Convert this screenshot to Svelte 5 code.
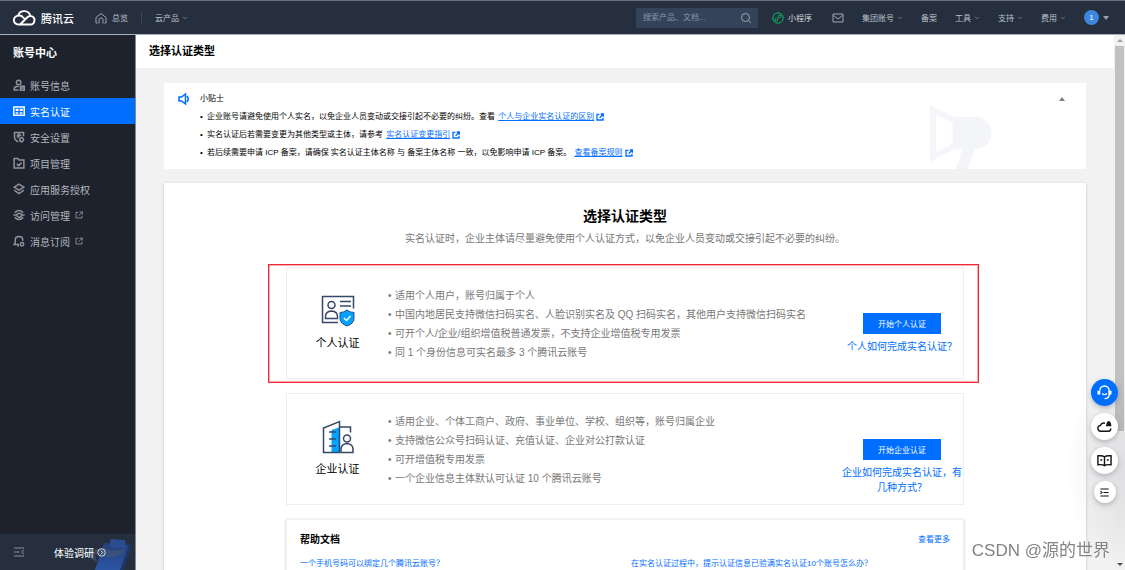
<script>
    let keyword = '';
    let tipsOpen = true;

    const menus = [
        { name: '集团账号', arrow: true },
        { name: '备案', arrow: false },
        { name: '工具', arrow: true },
        { name: '支持', arrow: true },
        { name: '费用', arrow: true }
    ];

    // Icon paths are drawn on a 16x16 grid
    const sideItems = [
        {
            name: '账号信息',
            icon: 'M7.5 1.5a3 3 0 1 1 0 6a3 3 0 0 1 0-6z M7.500 14.500h-6v-1q0-3.500 4-3.500h2 M10 9.500h5v5.500h-5z M10 12h5'
        },
        {
            name: '实名认证',
            icon: 'M1 2.500h14v11h-14z M4.500 6h2v1h-2z M3.500 10.500h3.500 M10 6h2v1h-2z M9 10.500h3.500',
            active: true
        },
        {
            name: '安全设置',
            icon: 'M14 7v-5h-12v6q0 4 5 6.500 M5 5.500h6 M8 3v5 M5 8h3 M11.500 9a2.500 2.500 0 1 1 0 5a2.500 2.500 0 0 1 0-5z M11.500 7.500v1.500 M11.500 14v1.500'
        },
        {
            name: '项目管理',
            icon: 'M1.500 14.500v-12.500h5l1.500 2h6.500v10.500z M5 9l2.500 2.500l4-4'
        },
        {
            name: '应用服务授权',
            icon: 'M8 1.500l6.500 4l-6.500 4l-6.500-4z M1.500 9.500l6.500 4.500l6.500-4.500'
        },
        {
            name: '访问管理',
            icon: 'M2.500 5a6.500 6.500 0 0 1 11 0 M13.500 11a6.500 6.500 0 0 1-11 0 M0.500 8h4l2-2h3.500l2 2h3.500 M5 9l2.500 2h2.500l2-3',
            external: true
        },
        {
            name: '消息订阅',
            icon: 'M13 7.500v-1q0-4.500-5-4.500t-5 4.500v4l-1.500 2h6.500 M6 14.500h2 M12 10a2.250 2.250 0 1 1 0 4.500a2.250 2.250 0 0 1 0-4.500z',
            external: true
        }
    ];

    const tips = [
        {
            text: '企业账号请避免使用个人实名，以免企业人员变动或交接引起不必要的纠纷。查看',
            link: '个人与企业实名认证的区别'
        },
        {
            text: '实名认证后若需要变更为其他类型或主体，请参考',
            link: '实名认证变更指引'
        },
        {
            text: '若后续需要申请 ICP 备案，请确保 实名认证主体名称 与 备案主体名称 一致，以免影响申请 ICP 备案。',
            link: '查看备案规则'
        }
    ];

    const types = [
        {
            id: 'person',
            name: '个人认证',
            button: '开始个人认证',
            question: '个人如何完成实名认证？',
            marked: true,
            rules: [
                '适用个人用户，账号归属于个人',
                '中国内地居民支持微信扫码实名、人脸识别实名及 QQ 扫码实名，其他用户支持微信扫码实名',
                '可开个人/企业/组织增值税普通发票，不支持企业增值税专用发票',
                '同 1 个身份信息可实名最多 3 个腾讯云账号'
            ]
        },
        {
            id: 'company',
            name: '企业认证',
            button: '开始企业认证',
            question: '企业如何完成实名认证，有几种方式？',
            marked: false,
            rules: [
                '适用企业、个体工商户、政府、事业单位、学校、组织等，账号归属企业',
                '支持微信公众号扫码认证、充值认证、企业对公打款认证',
                '可开增值税专用发票',
                '一个企业信息主体默认可认证 10 个腾讯云账号'
            ]
        }
    ];

    const docs = [
        '一个手机号码可以绑定几个腾讯云账号？',
        '在实名认证过程中，提示认证信息已验满实名认证10个账号怎么办？'
    ];
</script>

{#snippet chevron()}
    <svg class="chevron" viewBox="0 0 8 8"><path d="M1.500 2.500l2.500 2.500l2.500-2.500" /></svg>
{/snippet}

{#snippet external()}
    <svg class="external" viewBox="0 0 12 12"><path d="M5 2h-3.500v8.500h9v-3.500 M7 1.500h4v4 M11 1.500l-5.500 5.500" /></svg>
{/snippet}

<div class="page">
    <header>
        <a class="logo" href="#home">
            <svg viewBox="0 0 24 18">
                <path d="M5.500 15.800h12.500a4.500 4.500 0 0 0 1.200-8.800c-1.600-.4-3 0-4.200 1.200l-7.600 7.600 M12.600 10.400l-3.200-3.100a4.700 4.700 0 0 0-4-.7a4.600 4.600 0 0 0 .2 9.200 M5.300 6.600a6.600 6.600 0 0 1 12.800.4" />
            </svg>
            <span>腾讯云</span>
        </a>
        <a class="overview" href="#overview">
            <svg class="line-icon" viewBox="0 0 12 12"><path d="M2.500 11h-1.500v-5.500l5-4l5 4v5.500h-1.500 M4 11.500v-4q0-1.500 2-1.500t2 1.500v4" /></svg>
            总览
        </a>
        <span class="divider"></span>
        <button class="menu">云产品{@render chevron()}</button>
        <div class="search">
            <input type="text" aria-label="搜索" placeholder="搜索产品、文档..." bind:value={keyword}>
            <svg class="line-icon" viewBox="0 0 12 12"><circle cx="5.500" cy="5.500" r="4" /><path d="M8.500 8.500l2.500 2.500" /></svg>
        </div>
        <a class="mini" href="#mini">
            <svg viewBox="0 0 12 12"><circle cx="6" cy="6" r="5.200" /><path d="M6.300 4.800q0-1.800 1.500-1.800t1.200 1.500t-1.500 1.300 M5.700 7.200q0 1.800-1.500 1.800t-1.200-1.500t1.500-1.300 M6.300 4.600l-.6 2.800" /></svg>
            小程序
        </a>
        <button class="mail" aria-label="站内信">
            <svg class="line-icon" viewBox="0 0 12 12"><path d="M1 2h10v8h-10z M1.500 3.500l4.500 3.500l4.500-3.500" /></svg>
        </button>
        <nav class="menus">
            {#each menus as item}
                <button class="menu">{item.name}{#if item.arrow}{@render chevron()}{/if}</button>
            {/each}
        </nav>
        <button class="user">
            <span class="avatar">1</span>
            <span class="caret"></span>
        </button>
    </header>

    <div class="body">
        <aside>
            <h2>账号中心</h2>
            <nav>
                {#each sideItems as item}
                    <a href="#menu" class:active={item.active}>
                        <svg class="side-icon" viewBox="0 0 16 16"><path d={item.icon} /></svg>
                        {item.name}
                        {#if item.external}{@render external()}{/if}
                    </a>
                {/each}
            </nav>
            <div class="side-footer">
                <button class="fold" aria-label="收起菜单">
                    <svg viewBox="0 0 12 12"><path d="M1 2h10 M1 6h5.500 M1 10h10 M11 4l-2.500 2l2.500 2" /></svg>
                </button>
                <a href="#survey">
                    体验调研
                    <svg viewBox="0 0 12 12"><circle cx="6" cy="6" r="5" /><path d="M5 3.500l2.500 2.500l-2.500 2.500" /></svg>
                </a>
                <svg class="clipboard" viewBox="0 0 56 36">
                    <defs>
                        <linearGradient id="board" x1="0" y1="0" x2="0" y2="1">
                            <stop offset="0" stop-color="#253f76" />
                            <stop offset="1" stop-color="#2c55a5" />
                        </linearGradient>
                    </defs>
                    <path d="M25 9l28 2l-9 25h-28z" fill="url(#board)" />
                    <path d="M53 11l-9 25h-3l9-25z" fill="#1e3566" />
                    <path d="M32 5l14 1l1 7q-8 3-17-1z" fill="#2b4c8f" />
                    <path d="M3 20l9-4l12-2q14 5 23 0q-4 9-15 9q-8 0-14-3l-2 1l2 7z" fill="#485876" opacity="0.6" />
                </svg>
            </div>
        </aside>

        <main>
            <h1>选择认证类型</h1>
            <div class="content">
                <section class="tips">
                    <svg class="horn" viewBox="0 0 12 12"><path d="M1 4h2.500l4-3v10l-4-3h-2.500z M9 3q2.500 3 0 6" /></svg>
                    <div class="tips-text">
                        <h3>小贴士</h3>
                        {#if tipsOpen}
                            <ul>
                                {#each tips as tip}
                                    <li>{tip.text} <a href="#tip">{tip.link}</a> {@render external()}</li>
                                {/each}
                            </ul>
                        {/if}
                    </div>
                    <svg class="megaphone" viewBox="0 0 63 65">
                        <path fill-rule="evenodd" d="M0 0l24 12h22a16 16 0 0 1 0 33l-8 20h-12l7-20h-9l-24 13z M6 10v38l17-9v-21z" />
                    </svg>
                    <button class="toggle" aria-label="收起" onclick={() => tipsOpen = !tipsOpen}></button>
                </section>

                <section class="panel">
                    <h2>选择认证类型</h2>
                    <p class="summary">实名认证时，企业主体请尽量避免使用个人认证方式，以免企业人员变动或交接引起不必要的纠纷。</p>

                    {#each types as type}
                        <article class:marked={type.marked}>
                            <div class="kind">
                                {#if type.id === 'person'}
                                    <svg viewBox="0 0 34 34">
                                        <path class="stroke" d="M17 28.500h-15.500v-26h31v12 M19 7.500h11 M19 12h11" />
                                        <circle class="stroke" cx="10.500" cy="11" r="3.500" />
                                        <path class="stroke" d="M4.500 24.500v-2q0-5 6-5.500q6 .5 6 5.500v2z" />
                                        <path d="M26 16q3 2.500 7 2.500v6q0 5-7 7.500q-7-2.500-7-7.500v-6q4 0 7-2.500z" fill="#00a4ff" stroke="#2a4d80" />
                                        <path d="M23 24l2.500 2.500l4-4.500" fill="none" stroke="#fff" stroke-width="1.500" />
                                    </svg>
                                {:else}
                                    <svg viewBox="0 0 34 34">
                                        <path d="M10.500 10l7.500-2.500v25h-7.500z" fill="#00a4ff" stroke="none" />
                                        <path class="stroke" d="M2.500 32.500v-24.500l16-6.500v31z M8 12h7 M8 19h7 M8 26h7 M18.500 7h11v5.500" />
                                        <circle class="stroke" cx="26" cy="18.500" r="3.500" />
                                        <path class="stroke" d="M20 32.500v-3q0-5.500 6-6q6 .5 6 6v3z" />
                                    </svg>
                                {/if}
                                <h3>{type.name}</h3>
                            </div>
                            <ul>
                                {#each type.rules as rule}
                                    <li>{rule}</li>
                                {/each}
                            </ul>
                            <div class="action">
                                <button>{type.button}</button>
                                <a href="#guide">{type.question}</a>
                            </div>
                        </article>
                    {/each}

                    <div class="docs">
                        <div class="docs-head">
                            <h3>帮助文档</h3>
                            <a href="#more">查看更多</a>
                        </div>
                        <div class="docs-list">
                            {#each docs as doc}
                                <a href="#doc">{doc}</a>
                            {/each}
                        </div>
                    </div>
                </section>
            </div>
        </main>

        <div class="scrollbar">
            <span class="up"></span>
            <span class="thumb"></span>
            <span class="down"></span>
        </div>
    </div>

    <div class="haze"></div>

    <div class="floats">
        <button class="primary" aria-label="在线客服">
            <svg viewBox="0 0 16 16"><path d="M3 6a5 5 0 0 1 10 0v4q0 4-5 4.500 M5.500 9q2.500 2.500 5 0" /><path d="M2 6v4 M14 6v4" stroke-width="3" /></svg>
        </button>
        <button aria-label="云助手">
            <svg viewBox="0 0 16 16"><path d="M8.500 4.500q-3.500-1-5 2.500q-3 .5-2.500 3.500q.5 2.500 3 2.500h8q3 0 2.500-3" /><path d="M10.500 7l.5-2.500q.5-1.500 1.500-1.500t1.500 1.500l.5 2.500z" fill="currentColor" /></svg>
        </button>
        <button aria-label="文档">
            <svg viewBox="0 0 16 16"><path d="M8 4q-2-1.500-7-1v9.500q5-.5 7 1q2-1.500 7-1v-9.500q-5-.5-7 1v9.500 M3.500 7.500h2 M10.500 7.500h2" /></svg>
        </button>
        <button class="small" aria-label="更多">
            <svg viewBox="0 0 16 16"><path d="M2 3h12 M6.500 8h7.500 M2 13h12 M2 6l2.500 2l-2.500 2" /></svg>
        </button>
    </div>

    <div class="watermark">CSDN @源的世界</div>
</div>

<style>
    :global(body) {
        margin: 0;
        overflow: hidden;
    }

    .page {
        display: flex;
        flex-direction: column;
        height: 100vh;
        font-family: "Liberation Sans", "Noto Sans CJK SC", sans-serif;
        font-size: 10px;
        color: #000;
    }

    h1, h2, h3, p, ul {
        margin: 0;
        padding: 0;
    }

    ul {
        list-style: none;
    }

    a {
        color: #006eff;
        text-decoration: none;
    }

    button {
        border: none;
        padding: 0;
        background: none;
        font-family: inherit;
        font-size: 8px;
        color: inherit;
        cursor: pointer;
    }

    svg {
        display: block;
        flex: none;
        fill: none;
        stroke: currentColor;
    }

    header {
        display: flex;
        align-items: center;
        flex: none;
        box-sizing: border-box;
        height: 35px;
        padding: 0 16px 0 13px;
        border-top: 1px solid #68737f;
        border-bottom: 1px solid #a9afbd;
        background: #262f3e;
        color: #bcc1c9;
        font-size: 8px;
    }

    header a {
        display: flex;
        align-items: center;
        color: inherit;
    }

    .logo {
        gap: 5px;
        color: #fff;
        font-size: 11px;
        font-weight: 500;
    }

    .logo svg {
        width: 23px;
        height: 18px;
        stroke-width: 2;
    }

    .line-icon {
        width: 12px;
        height: 12px;
        color: #a0a7b1;
    }

    .overview {
        gap: 5px;
        margin-left: 21px;
    }

    .divider {
        width: 1px;
        height: 11px;
        margin: 0 13px;
        background: #3d4859;
    }

    .menu {
        display: flex;
        align-items: center;
        gap: 3px;
        white-space: nowrap;
    }

    .chevron {
        width: 6px;
        height: 6px;
        color: #8a929e;
    }

    .search {
        display: flex;
        align-items: center;
        box-sizing: border-box;
        width: 122px;
        height: 20px;
        margin-left: auto;
        padding: 0 6px 0 7px;
        background: #34435a;
    }

    .search input {
        flex: 1;
        min-width: 0;
        border: none;
        padding: 0;
        outline: none;
        background: none;
        color: #fff;
        font-family: inherit;
        font-size: 8px;
    }

    .search input::placeholder {
        color: #8b95a4;
    }

    .mini {
        gap: 4px;
        margin-left: 14px;
        color: #d5d8dd;
    }

    .mini svg {
        width: 12px;
        height: 12px;
        color: #09bb5e;
    }

    .mail {
        margin-left: 20px;
    }

    .menus {
        display: flex;
        gap: 18px;
        margin-left: 18px;
    }

    .user {
        display: flex;
        align-items: center;
        gap: 4px;
        margin-left: 18px;
    }

    .avatar {
        width: 15px;
        border-radius: 50%;
        background: #3d86de;
        color: #fff;
        line-height: 15px;
        text-align: center;
    }

    .caret {
        border: 3px solid transparent;
        border-top: 4px solid #9aa1ab;
        border-bottom: none;
    }

    .body {
        display: flex;
        flex: 1;
        min-height: 0;
    }

    aside {
        display: flex;
        flex-direction: column;
        flex: none;
        width: 135px;
        border-right: 1px solid #85888e;
        background: #1e222d;
        color: #b4b7bd;
    }

    aside h2 {
        padding: 10px 13px;
        color: #fff;
        font-size: 11px;
        line-height: 17px;
    }

    aside nav a {
        display: flex;
        align-items: center;
        gap: 5px;
        height: 26px;
        padding-left: 13px;
        color: inherit;
    }

    aside nav a.active {
        background: #006eff;
        color: #fff;
    }

    .side-icon {
        width: 12px;
        height: 12px;
        color: #8d929b;
        stroke-width: 2;
    }

    .active .side-icon {
        color: #fff;
    }

    .external {
        width: 8px;
        height: 8px;
        stroke-width: 2;
    }

    aside .external {
        stroke-width: 1;
    }

    .side-footer {
        position: relative;
        display: flex;
        align-items: center;
        height: 36px;
        margin-top: auto;
        padding-left: 13px;
        background: #262f3e;
    }

    .fold svg {
        width: 12px;
        height: 12px;
        color: #8d929b;
    }

    .side-footer a {
        z-index: 1;
        display: flex;
        align-items: center;
        gap: 3px;
        margin-left: 29px;
        color: #fff;
    }

    .side-footer a svg {
        width: 9px;
        height: 9px;
    }

    .clipboard {
        position: absolute;
        right: 0;
        bottom: 0;
        width: 56px;
        height: 36px;
        stroke: none;
    }

    main {
        display: flex;
        flex-direction: column;
        flex: 1;
        min-width: 0;
        overflow: hidden;
        background: #f2f2f2;
    }

    h1 {
        flex: none;
        padding: 0 13px;
        background: #fff;
        font-size: 11px;
        line-height: 33px;
    }

    .content {
        padding: 15px 28px 0;
    }

    .tips {
        position: relative;
        display: flex;
        gap: 10px;
        margin-bottom: 14px;
        padding: 7px 14px;
        background: #fff;
        font-size: 8px;
        line-height: 18px;
    }

    .horn {
        width: 12px;
        height: 18px;
        color: #006eff;
        stroke-width: 1.5;
    }

    .tips-text {
        z-index: 1;
        flex: 1;
    }

    .tips h3 {
        font-size: 8px;
        font-weight: normal;
    }

    .tips li::before,
    article li::before {
        content: "•";
        display: inline-block;
        width: 7px;
    }

    .tips li a {
        margin-left: 1px;
        text-decoration: underline;
    }

    .tips .external {
        display: inline-block;
        vertical-align: middle;
        color: #006eff;
    }

    .megaphone {
        position: absolute;
        right: 94px;
        bottom: 0;
        width: 62px;
        height: 64px;
        fill: #f3f5f9;
        stroke: none;
    }

    .toggle {
        align-self: flex-start;
        margin: 7px 7px 0 0;
        border: 3px solid transparent;
        border-top: none;
        border-bottom: 4px solid #808080;
    }

    .panel {
        min-height: 400px;
        padding-top: 23px;
        background: #fff;
        box-shadow: 0 1px 3px rgba(0, 0, 0, 0.2);
    }

    .panel h2 {
        font-size: 14px;
        line-height: 20px;
        text-align: center;
    }

    .summary {
        margin: 5px 0 20px;
        color: #777;
        line-height: 16px;
        text-align: center;
    }

    article, .docs {
        box-sizing: border-box;
        max-width: 678px;
        margin: 0 auto 14px;
        border: 1px solid #eee;
    }

    article {
        position: relative;
        display: flex;
        min-height: 112px;
    }

    .marked::after {
        content: "";
        position: absolute;
        inset: -4px -16px -5px -19px;
        border: 1px solid #ee2a36;
        box-shadow: inset 0 0 0 1px rgba(238, 42, 54, 0.4);
        pointer-events: none;
    }

    .kind {
        display: flex;
        flex-direction: column;
        align-items: center;
        gap: 7px;
        width: 101px;
        padding-top: 26px;
    }

    .kind svg {
        width: 34px;
        height: 34px;
    }

    .stroke {
        stroke: #34486a;
        stroke-width: 1.5;
    }

    .kind h3 {
        font-size: 11px;
        font-weight: normal;
        line-height: 16px;
    }

    article ul {
        flex: 1;
        padding: 18px 0 16px;
        color: #777;
        line-height: 19px;
    }

    .action {
        display: flex;
        flex-direction: column;
        align-items: center;
        gap: 5px;
        width: 122px;
        padding-top: 45px;
    }

    .action button {
        width: 78px;
        height: 21px;
        background: #006eff;
        color: #fff;
    }

    .action a {
        line-height: 15px;
        text-align: center;
    }

    .docs {
        padding: 11px 13px;
        box-shadow: 0 1px 3px rgba(0, 0, 0, 0.2);
        font-size: 8px;
    }

    .docs-head {
        display: flex;
        justify-content: space-between;
        line-height: 18px;
    }

    .docs h3 {
        font-size: 10px;
    }

    .docs-list {
        display: grid;
        grid-template-columns: 1fr 1fr;
        gap: 12px;
        margin-top: 9px;
        line-height: 12px;
    }

    .scrollbar {
        display: flex;
        flex-direction: column;
        align-items: center;
        flex: none;
        width: 11px;
        background: #f1f1f1;
    }

    .up, .down {
        margin: 4px 0;
        border: 3px solid transparent;
    }

    .up {
        border-top: none;
        border-bottom: 3px solid #a0a0a0;
    }

    .down {
        margin-top: auto;
        border-bottom: none;
        border-top: 3px solid #505050;
    }

    .thumb {
        flex: 0 0 72%;
        width: 9px;
        background: #c1c1c1;
    }

    .haze {
        position: fixed;
        right: 0;
        bottom: 0;
        width: 60px;
        height: 200px;
        background: radial-gradient(ellipse at right, rgba(54, 58, 80, 0.1), transparent 70%);
        pointer-events: none;
    }

    .floats {
        position: fixed;
        right: 7px;
        bottom: 67px;
        display: flex;
        flex-direction: column;
        align-items: center;
        gap: 7px;
    }

    .floats button {
        display: flex;
        align-items: center;
        justify-content: center;
        width: 27px;
        height: 27px;
        border-radius: 50%;
        background: #fff;
        box-shadow: 0 2px 5px rgba(54, 58, 80, 0.3);
        color: #111;
    }

    .floats .primary {
        background: #006eff;
        color: #fff;
    }

    .floats .small {
        width: 22px;
        height: 22px;
    }

    .floats svg {
        width: 15px;
        height: 15px;
        stroke-width: 1.5;
    }

    .floats .small svg {
        width: 11px;
        height: 11px;
    }

    .watermark {
        position: fixed;
        right: 15px;
        bottom: 7px;
        color: #838383;
        font-size: 17px;
        line-height: 24px;
        text-shadow: 0 0 1px #fff;
    }
</style>
